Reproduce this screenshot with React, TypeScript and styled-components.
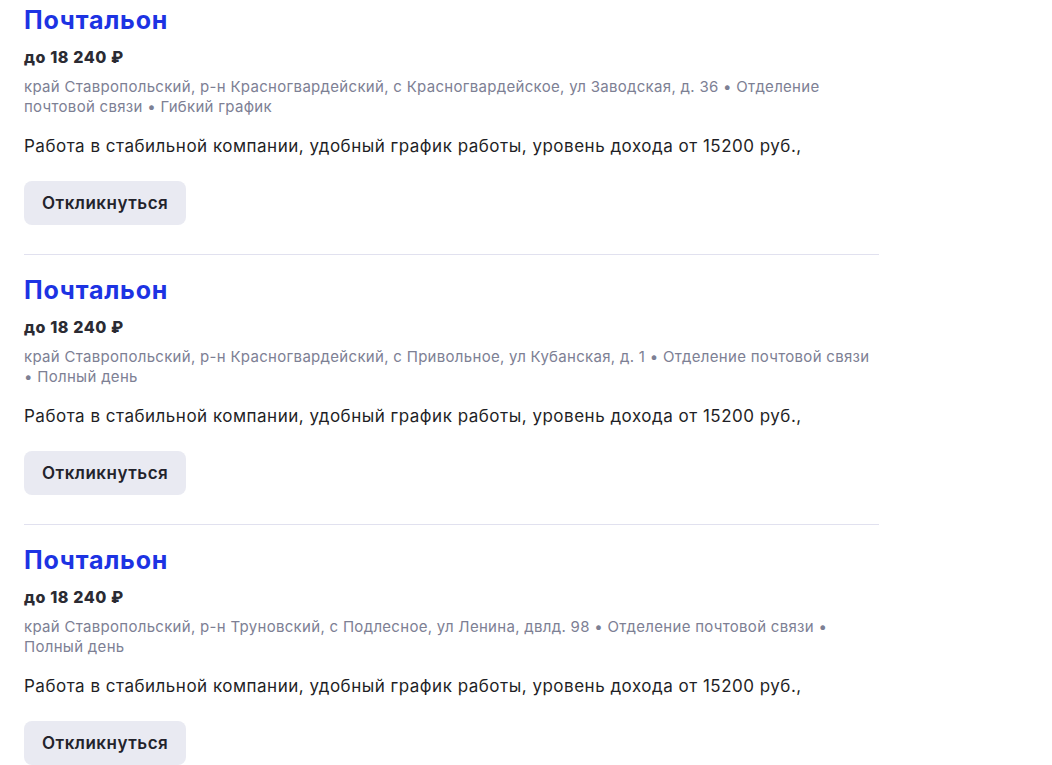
import styled, { createGlobalStyle } from "styled-components"

const GlobalStyle = createGlobalStyle`
  body {
    margin: 0;
    background: #fff;
    font-family: Inter, "Noto Sans", sans-serif;
    -webkit-font-smoothing: antialiased;
  }
`

const List = styled.div`
  width: 855px;
  padding: 3px 0 0 24px;
`

const Card = styled.div`
  padding-bottom: 29px;
  margin-bottom: 18px;
  border-bottom: 1px solid #e1e1ef;

  &:last-child {
    padding-bottom: 0;
    margin-bottom: 0;
    border-bottom: none;
  }
`

const Title = styled.a`
  display: block;
  font-size: 25px;
  line-height: 34px;
  font-weight: 700;
  color: #1d33e3;
  text-decoration: none;
  letter-spacing: 0.8px;
`

const Salary = styled.div`
  margin-top: 8px;
  font-size: 16px;
  line-height: 24px;
  font-weight: 800;
  color: #2b2b33;
  letter-spacing: 0.6px;
`

const Address = styled.div`
  margin-top: 8px;
  font-size: 15px;
  line-height: 20px;
  color: #7d8094;
  letter-spacing: 0.3px;
`

const Description = styled.p`
  margin: 17px 0 0;
  font-size: 17px;
  line-height: 24px;
  color: #1f1f26;
  letter-spacing: 0.5px;
`

const Button = styled.button`
  display: block;
  margin-top: 23px;
  height: 44px;
  padding: 0 18px;
  border: none;
  border-radius: 8px;
  background: #e9eaf2;
  font-family: inherit;
  font-size: 17px;
  font-weight: 600;
  color: #23232b;
  letter-spacing: 0.5px;
  cursor: pointer;
`

type Vacancy = {
  title: string
  salary: string
  address: string
  text: string
}

const vacancies: Vacancy[] = [
  {
    title: "Почтальон",
    salary: "до 18 240 ₽",
    address: "край Ставропольский, р-н Красногвардейский, с Красногвардейское, ул Заводская, д. 36 • Отделение почтовой связи • Гибкий график",
    text: "Работа в стабильной компании, удобный график работы, уровень дохода от 15200 руб.,",
  },
  {
    title: "Почтальон",
    salary: "до 18 240 ₽",
    address: "край Ставропольский, р-н Красногвардейский, с Привольное, ул Кубанская, д. 1 • Отделение почтовой связи • Полный день",
    text: "Работа в стабильной компании, удобный график работы, уровень дохода от 15200 руб.,",
  },
  {
    title: "Почтальон",
    salary: "до 18 240 ₽",
    address: "край Ставропольский, р-н Труновский, с Подлесное, ул Ленина, двлд. 98 • Отделение почтовой связи • Полный день",
    text: "Работа в стабильной компании, удобный график работы, уровень дохода от 15200 руб.,",
  },
]

export default function App() {
  return (
    <>
      <GlobalStyle />
      <List>
        {vacancies.map((v, i) => (
          <Card key={i}>
            <Title href="#">{v.title}</Title>
            <Salary>{v.salary}</Salary>
            <Address>{v.address}</Address>
            <Description>{v.text}</Description>
            <Button>Откликнуться</Button>
          </Card>
        ))}
      </List>
    </>
  )
}
